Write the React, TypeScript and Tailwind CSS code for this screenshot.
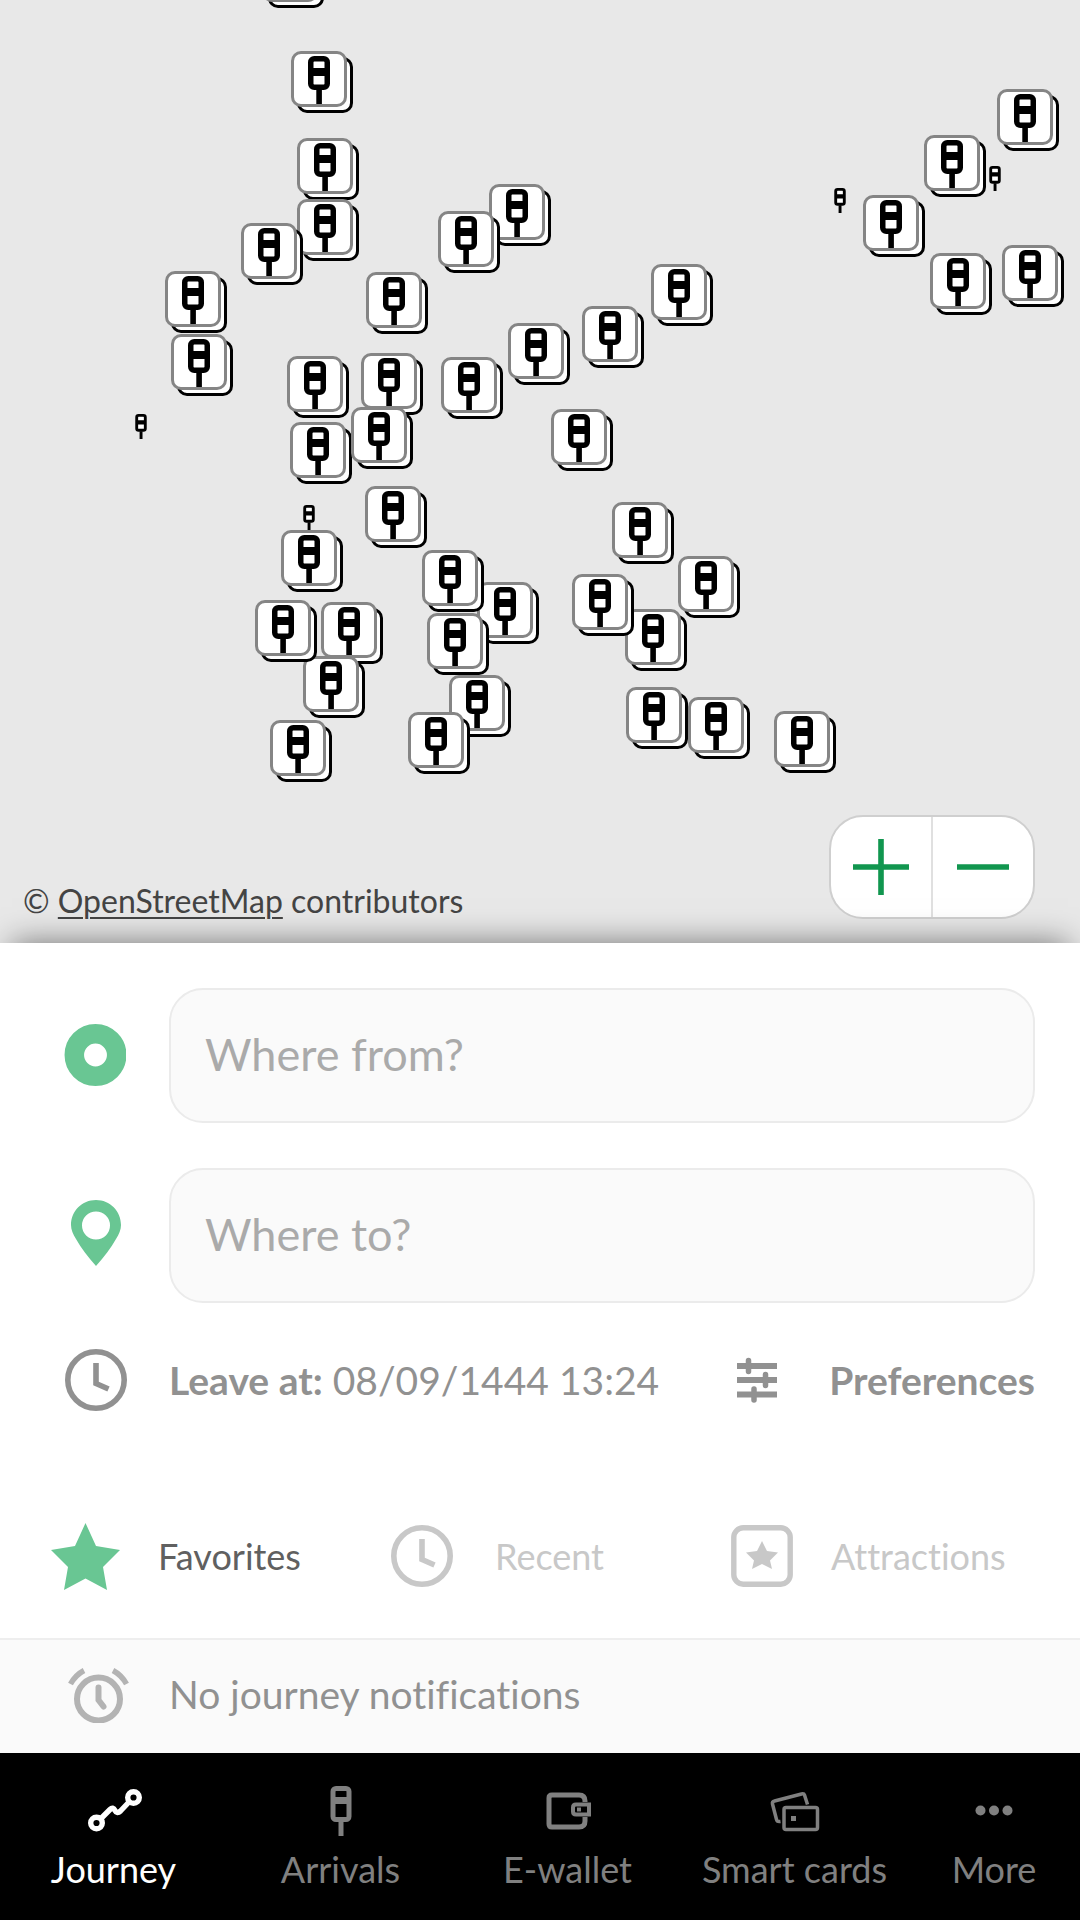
import React from "react";

type Point = [number, number];

// Later entries are painted over earlier ones.
const clusters: Point[] = [
  [262, -54], [291, 51], [297, 138], [297, 199], [241, 223], [165, 271], [171, 334],
  [366, 272], [287, 356], [361, 353], [489, 184], [438, 211], [651, 264], [582, 306],
  [508, 323], [441, 357], [551, 409], [997, 89], [924, 135], [863, 195], [930, 253],
  [1002, 245], [290, 422], [351, 407], [365, 486], [281, 530], [321, 602], [303, 656],
  [255, 600], [270, 720], [477, 582], [422, 550], [427, 613], [449, 675], [408, 712],
  [612, 502], [678, 556], [625, 609], [572, 574], [626, 687], [688, 697], [774, 711],
];

const stops: Point[] = [[834, 188], [989, 166], [135, 414], [303, 505]];

function StopSign({ className }: { className: string }) {
  return (
    <svg viewBox="0 0 22 48" className={className} aria-hidden="true">
      <rect x="2.75" y="2.75" width="16.5" height="28.5" rx="3.5" fill="#fff" stroke="#000" strokeWidth="5.5" />
      <path d="M5 12h12v8H5zM8.3 33h5.6v15H8.3z" fill="#000" />
    </svg>
  );
}

function Clock({ className }: { className: string }) {
  return (
    <svg viewBox="0 0 62 62" className={className} fill="none" stroke="currentColor" strokeWidth="5.6" aria-hidden="true">
      <circle cx="31" cy="31" r="28.2" />
      <path d="M31 14v20.5l12.5 5.5" />
    </svg>
  );
}

function Field({ id, label, icon }: { id: string; label: string; icon: React.ReactNode }) {
  return (
    <div className="flex items-center">
      <label htmlFor={id} aria-label={label} className="flex w-[169px] shrink-0 pl-16">
        {icon}
      </label>
      <input
        id={id}
        type="text"
        placeholder={label}
        className="h-[135px] min-w-0 flex-1 rounded-[34px] border-2 border-[#ebebeb] bg-[#fafafa] px-[34px] pb-1 text-[45px] text-[#555] outline-none placeholder:text-[#aaaaaa]"
      />
    </div>
  );
}

function NavItem({ label, active, children }: { label: string; active?: boolean; children: React.ReactNode }) {
  return (
    <button
      type="button"
      aria-current={active ? "page" : undefined}
      className={`flex flex-col items-center pt-8 ${active ? "text-white" : "text-[#808080]"}`}
    >
      <svg viewBox="0 0 56 52" className="h-[52px] w-14" fill="none" stroke="currentColor" aria-hidden="true">
        {children}
      </svg>
      <span className="mt-2.5 text-[36px] leading-[44px] whitespace-nowrap">{label}</span>
    </button>
  );
}

export default function App() {
  return (
    <div className="flex min-h-screen flex-col overflow-hidden bg-white font-['Lato',sans-serif] [font-variant-ligatures:none]">
      <section aria-label="Map" className="relative flex min-h-[800px] flex-1 flex-col justify-end overflow-hidden bg-[#e8e8e8]">
        {stops.map(([x, y]) => (
          <button key={`${x}-${y}`} type="button" aria-label="Stop" className="absolute" style={{ left: x, top: y }}>
            <StopSign className="h-[25px] w-3" />
          </button>
        ))}
        {clusters.map(([x, y]) => (
          <button key={`${x}-${y}`} type="button" aria-label="Stops" className="absolute size-[62px]" style={{ left: x, top: y }}>
            <span className="absolute right-0 bottom-0 size-[56px] rounded-[10px] border-3 border-black bg-white" />
            <span className="absolute top-0 left-0 flex size-[56px] justify-center rounded-[10px] border-3 border-[#858585] bg-white pt-0.5">
              <StopSign className="h-12 w-[22px]" />
            </span>
          </button>
        ))}
        <div className="relative flex items-end justify-between pr-[45px] pb-6 pl-[23px]">
          <p className="text-[32px] leading-9 text-[#444]">
            © <a href="#osm" className="underline decoration-2 underline-offset-4">OpenStreetMap</a> contributors
          </p>
          <div className="flex h-[104px] w-[206px] overflow-hidden rounded-[34px] border-2 border-[#cfcfcf] bg-white text-[#11964f]">
            <button type="button" aria-label="Zoom in" className="flex flex-1 items-center justify-center border-r-2 border-[#e0e0e0]">
              <svg viewBox="0 0 56 56" className="size-14" stroke="currentColor" strokeWidth="5.6"><path d="M0 28h56M28 0v56" /></svg>
            </button>
            <button type="button" aria-label="Zoom out" className="flex flex-1 items-center justify-center">
              <svg viewBox="0 0 52 56" className="h-14 w-[52px]" stroke="currentColor" strokeWidth="5.6"><path d="M0 28h52" /></svg>
            </button>
          </div>
        </div>
      </section>

      <main className="relative bg-white pt-[45px] shadow-[0_-12px_30px_-12px_rgba(0,0,0,0.5)]">
        <div className="flex flex-col gap-[45px] pr-[45px]">
          <Field
            id="from"
            label="Where from?"
            icon={<svg viewBox="0 0 62 64" className="h-16 w-[62px]"><circle cx="31.500" cy="31" r="21.2" fill="none" stroke="#69c693" strokeWidth="19.5" /></svg>}
          />
          <Field
            id="to"
            label="Where to?"
            icon={
              <svg viewBox="0 0 62 74" className="h-[74px] w-[62px]" fill="#69c693">
                <path fillRule="evenodd" d="M32 1c14 0 25 11 25 25 0 5-2 9-5 14C47 49 40 58 32 67 24 58 17 49 12 40 9 35 7 31 7 26 7 12 18 1 32 1zm0 11.500a14 14 0 1 0 0 28 14 14 0 1 0 0-28z" />
              </svg>
            }
          />
        </div>

        <div className="flex h-[154px] items-center justify-between pr-[45px] pl-[65px] text-[39px] whitespace-nowrap text-[#919191]">
          <button type="button" className="flex items-center">
            <Clock className="mr-[42px] size-[62px]" />
            <span><b>Leave at:</b> 08/09/1444 13:24</span>
          </button>
          <button type="button" className="flex items-center gap-[52px] font-bold">
            <svg viewBox="0 0 40 46" className="h-[46px] w-10" fill="none" stroke="currentColor" aria-hidden="true">
              <path d="M0 9h40M0 23h40M0 37.500h40" strokeWidth="6" />
              <path d="M11.500 3.500v11M28.500 17.500v11M17 32v11" strokeWidth="5.500" strokeLinecap="round" />
            </svg>
            Preferences
          </button>
        </div>

        <div role="tablist" aria-label="Places" className="mt-[17px] grid h-[164px] grid-cols-[340fr_340fr_349fr] items-center pl-[51px] text-[36px] text-[#c8c8c8]">
          <button type="button" role="tab" aria-selected="true" className="flex items-center gap-[38px] text-[#606060]">
            <svg viewBox="0 0 69 67" className="h-[67px] w-[69px]" fill="#69c693" aria-hidden="true">
              <path d="M34.500 0 45 23l24 4-17 17 4 23-21.500-11.500L13 67l4-23L0 27l24-4z" />
            </svg>
            Favorites
          </button>
          <button type="button" role="tab" aria-selected="false" className="flex items-center gap-[42px]">
            <Clock className="size-[62px]" />
            Recent
          </button>
          <button type="button" role="tab" aria-selected="false" className="flex items-center gap-[38px]">
            <svg viewBox="0 0 62 62" className="size-[62px]" fill="none" aria-hidden="true">
              <rect x="2.800" y="2.800" width="56.400" height="56.400" rx="9.500" stroke="currentColor" strokeWidth="5.400" />
              <path fill="currentColor" d="m31 16 5 10 11 1.500-8 8 2 8.500-10-5-10 5 2-8.500-8-8L26 26z" />
            </svg>
            Attractions
          </button>
        </div>

        <div className="flex h-[115px] items-center border-t-2 border-[#eeeeee] bg-[#fafafa] pb-1 pl-[67px] text-[39px] text-[#919191]">
          <svg viewBox="0 0 62 56" className="mr-10 h-14 w-[62px] text-[#b3b3b3]" fill="none" stroke="currentColor" strokeWidth="6" aria-hidden="true">
            <circle cx="31.500" cy="32" r="21.500" />
            <path d="M31.500 20.500v12.500l5 6.500" strokeLinecap="round" />
            <path d="M3.500 17Q8.500 8 17 3.500M59.500 17Q54.500 8 46 3.500" strokeWidth="5.500" />
          </svg>
          No journey notifications
        </div>
      </main>

      <nav className="relative grid h-[167px] grid-cols-[227fr_227fr_227fr_227fr_172fr] items-start bg-black">
        <NavItem label="Journey" active>
          <g strokeWidth="5.400" strokeLinejoin="round">
            <circle cx="10.500" cy="38" r="5.800" />
            <circle cx="47.500" cy="12.500" r="5.800" />
            <path d="m15 33.500 9-9q3-3 5 1 2 4 5.500.500L43 17" />
          </g>
        </NavItem>
        <NavItem label="Arrivals">
          <rect x="20" y="3.500" width="16" height="31" rx="3" strokeWidth="5" />
          <path d="M20 15.500h16" strokeWidth="7" />
          <path d="M28 35v16" strokeWidth="5" />
        </NavItem>
        <NavItem label="E-wallet">
          <path d="M45 17v-1q0-6-6-6H12q-3 0-3 3v26q0 3 3 3h27q6 0 6-6v-4" strokeWidth="5" />
          <path d="M49 19.500H36q-3 0-3 3v4q0 3 3 3h13z" strokeWidth="4" />
          <rect x="37" y="22.500" width="4" height="4" fill="currentColor" stroke="none" />
        </NavItem>
        <NavItem label="Smart cards">
          <g strokeWidth="3.500" strokeLinejoin="round">
            <rect x="17" y="22.500" width="33.500" height="22" rx="2" />
            <path d="M40.500 19.500 37.500 10q-.5-1.500-3-1L7.500 16Q5 16.500 5.500 19l4 15.500q.5 2.500 4 2" />
          </g>
          <rect x="24" y="31" width="5" height="5" fill="currentColor" stroke="none" />
        </NavItem>
        <NavItem label="More">
          <g fill="currentColor" stroke="none">
            <circle cx="14.500" cy="25.500" r="5" />
            <circle cx="28" cy="25.500" r="5" />
            <circle cx="41.500" cy="25.500" r="5" />
          </g>
        </NavItem>
      </nav>
    </div>
  );
}
